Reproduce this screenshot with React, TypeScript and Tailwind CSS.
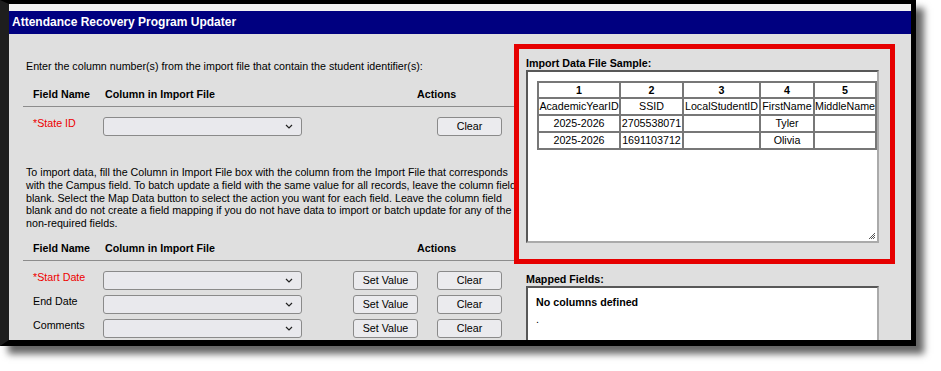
import React from "react";

const fieldRows = [
  { label: "*Start Date", required: true },
  { label: "End Date", required: false },
  { label: "Comments", required: false },
];

const sampleRows = [
  ["AcademicYearID", "SSID", "LocalStudentID", "FirstName", "MiddleName"],
  ["2025-2026", "2705538071", "", "Tyler", ""],
  ["2025-2026", "1691103712", "", "Olivia", ""],
];

// UI helpers
const Chevron = () => (
  <svg width="8" height="5" viewBox="0 0 8 5" className="mr-[8px]">
    <path d="M1 1 L4 4 L7 1" fill="none" stroke="#222" strokeWidth="1.2" />
  </svg>
);

const FakeSelect = () => (
  <div className="w-[199px] h-[19px] rounded-[3px] border border-[#8a8a8a] bg-[#e9e9ed] flex items-center justify-end">
    <Chevron />
  </div>
);

const Btn = ({ label, className = "" }: { label: string; className?: string }) => (
  <button className={`w-[65px] h-[19px] rounded-[3px] border border-[#8a8a8a] bg-[#ebebee] text-[10.7px] leading-none text-black ${className}`}>
    {label}
  </button>
);

const HeaderRow = () => (
  <div className="ml-[14px] pl-[10px] pb-[5px] border-b border-[#8c8c8c] flex font-bold leading-[13px] w-[520px]">
    <span className="w-[72px]">Field Name</span>
    <span className="w-[312px]">Column in Import File</span>
    <span>Actions</span>
  </div>
);

export default function App() {
  return (
    <div className="w-[941px] h-[371px] bg-white overflow-hidden font-['Liberation_Sans',Arial,sans-serif] text-[10.7px] text-black">
      <div className="w-[916px] h-[346px] border-black border-l-[9px] border-l-[#1e1e1e] border-t-[4px] border-r-[5px] border-b-[6px] shadow-[8px_8px_7px_rgba(0,0,0,0.6)] overflow-hidden bg-[#dfdfdf]">
        <div className="h-[7px] bg-[#f2f2f2]"></div>
        <div className="h-[23px] bg-[#000080] text-white font-bold text-[12px] leading-[23px] pl-[3px]">
          Attendance Recovery Program Updater
        </div>

        <div className="flex h-[306px]">
          {/* Left: field mapping */}
          <div className="w-[505px] shrink-0 overflow-hidden">
            <p className="pl-[17px] pt-[26px] leading-[13px]">
              Enter the column number(s) from the import file that contain the student identifier(s):
            </p>

            <div className="mt-[15px]">
              <HeaderRow />
            </div>

            <div className="mt-[10px] pl-[24px] flex items-start">
              <span className="w-[70px] leading-[13px] text-[#ee0000]">*State ID</span>
              <FakeSelect />
              <Btn label="Clear" className="ml-[135px]" />
            </div>

            <p className="mt-[30px] pl-[17px] leading-[12.8px] whitespace-nowrap">
              To import data, fill the Column in Import File box with the column from the Import File that corresponds
              <br />
              with the Campus field. To batch update a field with the same value for all records, leave the column field
              <br />
              blank. Select the Map Data button to select the action you want for each field. Leave the column field
              <br />
              blank and do not create a field mapping if you do not have data to import or batch update for any of the
              <br />
              non-required fields.
            </p>

            <div className="mt-[12px]">
              <HeaderRow />
            </div>

            <div className="mt-[10px] flex flex-col gap-[5px]">
              {fieldRows.map((r) => (
                <div key={r.label} className="pl-[24px] flex items-start">
                  <span className={`w-[70px] leading-[13px] ${r.required ? "text-[#ee0000]" : ""}`}>{r.label}</span>
                  <FakeSelect />
                  <Btn label="Set Value" className="ml-[51px]" />
                  <Btn label="Clear" className="ml-[19px]" />
                </div>
              ))}
            </div>
          </div>

          {/* Right: sample + mapped fields */}
          <div className="flex-1 pt-[10px]">
            <div className="w-[381px] h-[220px] border-[5px] border-[#e60000] pl-[7px] pt-[8px]">
              <div className="font-bold leading-[13px]">Import Data File Sample:</div>
              <div className="relative w-[353px] h-[173px] bg-white border-2 border-t-[#585858] border-l-[#585858] border-r-[#aaaaaa] border-b-[#aaaaaa] pl-[9px] pt-[9px] overflow-hidden">
                <table className="table-fixed border-separate border-spacing-0 border border-[#777] w-[340px]">
                  <colgroup>
                    <col className="w-[82px]" />
                    <col className="w-[63px]" />
                    <col className="w-[77px]" />
                    <col className="w-[54px]" />
                    <col className="w-[62px]" />
                  </colgroup>
                  <tbody>
                    <tr>
                      {[1, 2, 3, 4, 5].map((n) => (
                        <td key={n} className="h-[16px] p-0 border border-[#777] text-center font-bold leading-none">
                          {n}
                        </td>
                      ))}
                    </tr>
                    {sampleRows.map((row, i) => (
                      <tr key={i}>
                        {row.map((c, j) => (
                          <td key={j} className="h-[17px] p-0 border border-[#777] text-center leading-none whitespace-nowrap overflow-hidden">
                            {c}
                          </td>
                        ))}
                      </tr>
                    ))}
                  </tbody>
                </table>
                <svg width="8" height="8" viewBox="0 0 8 8" className="absolute right-[1px] bottom-[1px]">
                  <path d="M7 1 L1 7 M7 3 L3 7 M7 5 L5 7" stroke="#555" strokeWidth="1" />
                </svg>
              </div>
            </div>

            <div className="mt-[9px] pl-[12px] font-bold leading-[13px]">Mapped Fields:</div>
            <div className="ml-[12px] w-[353px] h-[100px] bg-white border-2 border-t-[#585858] border-l-[#585858] border-r-[#aaaaaa] border-b-[#aaaaaa] pl-[8px] pt-[8px]">
              <div className="font-bold leading-[13px]">No columns defined</div>
              <div className="mt-[4px] leading-[13px]">.</div>
            </div>
          </div>
        </div>
      </div>
    </div>
  );
}
